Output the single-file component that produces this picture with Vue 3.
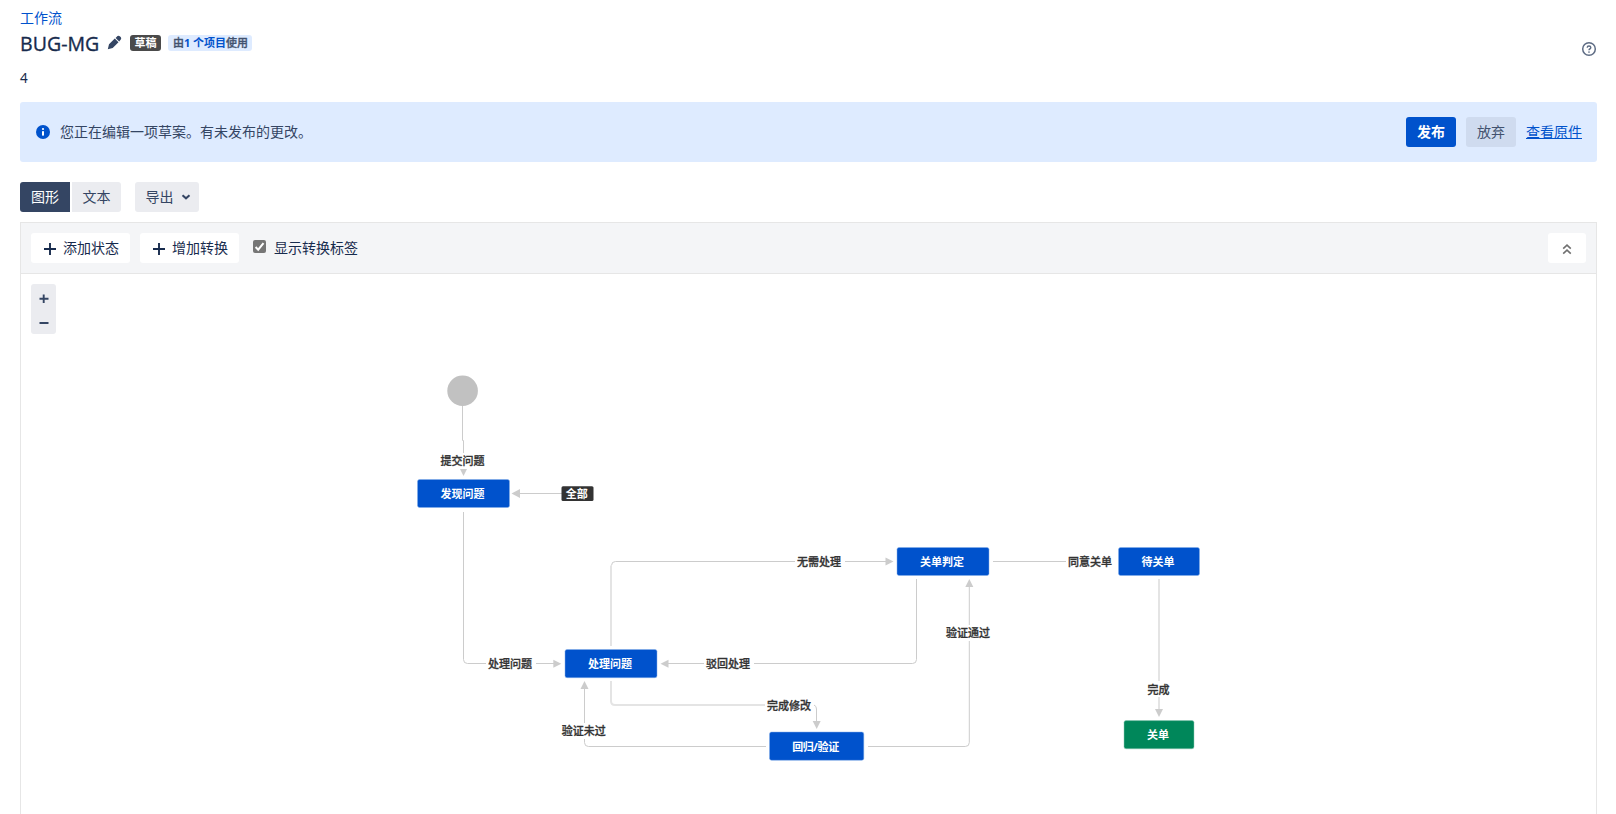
<script setup>
const nodes = [
  { t: '发现问题', x: 417.5, y: 479.5, w: 92, h: 28 },
  { t: '处理问题', x: 565, y: 649.5, w: 92, h: 28.2 },
  { t: '关单判定', x: 897, y: 547.5, w: 92, h: 28 },
  { t: '回归/验证', x: 769.5, y: 732, w: 94.3, h: 28.3, len: 47 },
  { t: '待关单', x: 1118.5, y: 547.5, w: 81, h: 28 },
  { t: '关单', x: 1124, y: 720.6, w: 70, h: 28.2, done: true },
]
const labels = [
  { t: '提交问题', x: 462.5, y: 461.3 },
  { t: '处理问题', x: 510, y: 664.3 },
  { t: '无需处理', x: 819, y: 562.3 },
  { t: '驳回处理', x: 728, y: 664.3 },
  { t: '完成修改', x: 789, y: 705.6 },
  { t: '验证未过', x: 583.7, y: 731.3 },
  { t: '验证通过', x: 968, y: 633.3 },
  { t: '同意关单', x: 1090, y: 562.3 },
  { t: '完成', x: 1158.5, y: 689.6 },
]
const thin = [
  'M462.5 406V440.5H463.5V453',
  'M519 493.5H562',
  'M463.5 512V659.5Q463.5 663.5 467.5 663.5H486',
  'M536 663.5H554',
  'M611.5 565.5Q611.5 561.5 615.5 561.5H795',
  'M845 561.5H886',
  'M916.5 579V659.5Q916.5 663.5 912.5 663.5H754',
  'M704 663.5H668',
  'M814 705Q816.5 706 816.5 709V722',
  'M766 746.5H588.5Q584.5 746.5 584.5 742.5V739',
  'M584.5 723V688',
  'M868 746.5H965.3Q969.3 746.5 969.3 742.5V641',
  'M969.3 625V586',
  'M993 561.5H1066',
]
const wide = [
  'M611 646V565.5',
  'M611 681V701Q611 705 615 705H765',
  'M1159 579V681M1159 697V710',
]
const arrows = [
  'M460 469h7l-3.5 7z',
  'M520 489v9l-8.5-4.5z',
  'M553.3 659.7v8l8-4z',
  'M885.5 557.5v8l8-4z',
  'M668.5 659.7v8l-8-4z',
  'M812.7 721h8l-4 8z',
  'M580.5 689h8l-4-8z',
  'M965.3 587h8l-4-8z',
  'M1155 709h8l-4 8z',
]
</script>

<template>
  <div class="page">
    <header class="head">
      <div class="head-main">
        <a class="crumb">工作流</a>
        <div class="title-row">
          <h1>BUG-MG</h1>
          <svg class="pencil" width="15" height="15" viewBox="0 0 15 15"><path d="M.8 14.200l1.200-5 5.800-5.600 3.700 3.700L5.700 13zM8.600 2.900l1.900-1.800q1.200-.9 2.300.1l.9.900q1.100 1.100.1 2.300l-1.600 2z" fill="#344563" /></svg>
          <span class="badge draft">草稿</span>
          <span class="badge used">由<a>1 个项目</a>使用</span>
        </div>
        <p class="desc">4</p>
      </div>
      <svg class="help" width="16" height="16" viewBox="0 0 16 16" fill="none"><circle cx="8" cy="8" r="6.300" stroke="#5e6c84" stroke-width="1.500" /><path d="M6.200 6.700Q6.200 5 8 5t1.800 1.600Q9.800 7.500 8.800 8 8 8.400 8 9.200" stroke="#5e6c84" stroke-width="1.400" /><circle cx="8" cy="11" r=".85" fill="#5e6c84" /></svg>
    </header>

    <section class="banner">
      <svg class="info" width="14" height="14" viewBox="0 0 14 14"><circle cx="7" cy="7" r="7" fill="#0052cc" /><circle cx="7" cy="4" r="1.100" fill="#fff" /><rect x="6" y="6" width="2" height="4.800" rx=".8" fill="#fff" /></svg>
      <span class="msg">您正在编辑一项草案。有未发布的更改。</span>
      <button class="btn primary">发布</button>
      <button class="btn discard">放弃</button>
      <a class="orig">查看原件</a>
    </section>

    <nav class="tabs">
      <button class="btn tab-on">图形</button>
      <button class="btn tab-off">文本</button>
      <button class="btn export">导出<svg width="10" height="8" viewBox="0 0 10 8" fill="none"><path d="M1.500 2.200L5 5.300l3.500-3.100" stroke="#344563" stroke-width="2" /></svg></button>
    </nav>

    <section class="panel">
      <div class="toolbar">
        <button class="btn tool"><svg width="12" height="12" viewBox="0 0 12 12"><path d="M6 0v12M0 6h12" stroke="#172b4d" stroke-width="1.900" /></svg>添加状态</button>
        <button class="btn tool"><svg width="12" height="12" viewBox="0 0 12 12"><path d="M6 0v12M0 6h12" stroke="#172b4d" stroke-width="1.900" /></svg>增加转换</button>
        <svg class="check" width="13" height="13" viewBox="0 0 13 13"><rect width="13" height="13" rx="2" fill="#767676" /><path d="M2.600 7L5.200 9.700 10.500 3.200" fill="none" stroke="#fff" stroke-width="2" /></svg>
        <span class="check-label">显示转换标签</span>
        <button class="btn collapse"><svg width="10" height="12" viewBox="0 0 10 12" fill="none"><path d="M1.200 5.700L5 2.200l3.800 3.500M1.200 10.700L5 7.200l3.800 3.500" stroke="#707070" stroke-width="1.600" /></svg></button>
      </div>
      <div class="canvas">
        <div class="zoom">
          <svg width="25" height="50" viewBox="0 0 25 50"><path d="M12.700 10.500v8.500M8.500 14.800h9M8.500 39h9" stroke="#344563" stroke-width="1.900" /></svg>
        </div>
        <svg class="graph" width="1575" height="540" viewBox="21 274 1575 540">
          <circle cx="462.600" cy="390.700" r="15.300" fill="#c1c1c1" />
          <g fill="none" stroke="#ccc"><path v-for="d in thin" :key="d" :d="d" /></g>
          <g fill="none" stroke="#e4e4e4" stroke-width="2"><path v-for="d in wide" :key="d" :d="d" /></g>
          <g fill="#ccc"><path v-for="d in arrows" :key="d" :d="d" /></g>
          <text v-for="l in labels" :key="l.t + l.x" class="label" :x="l.x" :y="l.y + 4">{{ l.t }}</text>
          <g v-for="n in nodes" :key="n.t">
            <rect :x="n.x" :y="n.y" :width="n.w" :height="n.h" rx="2" :fill="n.done ? '#00875a' : '#0052cc'" :stroke="n.done ? '#8cc9b4' : '#85aee8'" stroke-width=".5" />
            <text class="node" :x="n.x + n.w / 2 - 1" :y="n.y + n.h / 2 + 4.500" :textLength="n.len">{{ n.t }}</text>
          </g>
          <rect x="561.500" y="486.300" width="32" height="14.700" rx="1.500" fill="#333" />
          <text class="node" x="576.700" y="498">全部</text>
        </svg>
      </div>
    </section>
  </div>
</template>

<style>
body { background: #fff; overflow: hidden; }
</style>

<style scoped>
.page {
  box-sizing: border-box;
  height: 814px;
  padding: 0 19px 0 20px;
  overflow: hidden;
  display: flex;
  flex-direction: column;
  font: 14px/20px "Noto Sans", "Noto Sans CJK SC", sans-serif;
  color: #172b4d;
}
.head { height: 102px; display: flex; justify-content: space-between; flex: none; }
.crumb { display: block; height: 20px; margin-top: 8px; color: #0052cc; }
.title-row { display: flex; align-items: center; height: 28px; margin-top: 2px; }
h1 { margin: 0; width: 80px; font: 500 19.500px/28px "Open Sans", "Noto Sans", sans-serif; letter-spacing: .05px; -webkit-text-stroke: .35px #172b4d; white-space: nowrap; }
.pencil { margin: -3px 0 0 7px; }
.badge { height: 16px; box-sizing: border-box; border-radius: 3px; font-size: 11px; line-height: 16px; font-weight: 700; white-space: nowrap; margin-top: -2px; }
.draft { width: 31px; margin-left: 8px; text-align: center; background: #4a4a4a; color: #fff; }
.used { width: 84px; box-sizing: border-box; padding-left: 1px; margin-left: 7px; text-align: center; background: #deebff; color: #42526e; font-weight: 500; -webkit-text-stroke: .3px #42526e; }
.used a { color: #0052cc; font-weight: 700; -webkit-text-stroke: 0; }
.desc { margin: 10px 0 0; font-size: 13.500px; }
.help { margin: 41px 0 0; }
.banner { height: 60px; flex: none; display: flex; align-items: center; box-sizing: border-box; padding: 0 15px 0 16px; border-radius: 3px; background: #deebff; color: #344563; }
.msg { margin-left: 10px; flex: 1; }
.btn { box-sizing: border-box; height: 30px; padding: 0; border: 0; border-radius: 3px; display: flex; align-items: center; justify-content: center; font: inherit; color: #344563; }
.primary { width: 50px; background: #0052cc; color: #fff; font-weight: 700; }
.discard { width: 50px; margin: 0 10px; background: #cfdbef; color: #42526e; }
.orig { color: #0052cc; text-decoration: underline; }
.tabs { display: flex; height: 40px; margin-top: 20px; flex: none; }
.tab-on { width: 50px; background: #344563; color: #fff; border-radius: 3px 0 0 3px; }
.tab-off { width: 49px; margin-left: 2px; background: #ebecf0; border-radius: 0 3px 3px 0; }
.export { width: 64px; margin-left: 14px; padding-left: 2px; gap: 7px; background: #ebecf0; }
.panel { flex: 1; min-height: 0; border: 1px solid #e6e6e6; border-bottom: 0; }
.toolbar { height: 50px; display: flex; align-items: center; padding: 0 10px; background: #f4f5f7; border-bottom: 1px solid #e6e6e6; }
.tool { width: 99px; margin-right: 10px; gap: 7px; padding-left: 2px; background: #fff; color: #172b4d; }
.tool svg { position: relative; top: 1px; }
.check { margin: -4px 8px 0 4px; }
.check-label { flex: 1; }
.collapse { width: 38px; background: #fff; }
.collapse svg { margin-top: 2px; }
.canvas { position: relative; height: 540px; }
.zoom { position: absolute; left: 10px; top: 10px; width: 25px; height: 50px; border-radius: 3px; background: #ebecf0; }
.graph { display: block; }
.label, .node { font-family: "Noto Sans", "Noto Sans CJK SC", sans-serif; font-size: 11px; text-anchor: middle; }
.label { fill: #333; font-weight: 500; stroke: #333; stroke-width: .3px; }
.node { fill: #fff; font-weight: 700; }
</style>
